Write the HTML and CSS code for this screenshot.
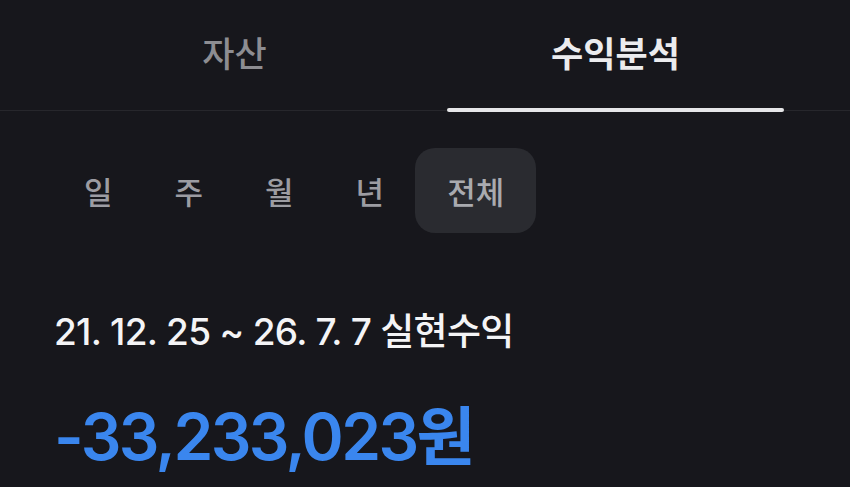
FILE: index.html
```html
<!DOCTYPE html>
<html lang="ko">
<head>
<meta charset="utf-8">
<link rel="stylesheet" href="styles.css">
</head>
<body>
<div class="screen">
  <nav class="tabs">
    <div class="tab"><span class="tab-label">자산</span><span class="tab-bar"></span></div>
    <div class="tab tab-active"><span class="tab-label">수익분석</span><span class="tab-bar"></span></div>
  </nav>
  <div class="content">
    <div class="periods">
      <span class="chip">일</span>
      <span class="chip">주</span>
      <span class="chip">월</span>
      <span class="chip">년</span>
      <span class="chip chip-active">전체</span>
    </div>
    <div class="range">21. 12. 25 ~ 26. 7. 7 실현수익</div>
    <div class="amount">-33,233,023원</div>
  </div>
</div>
</body>
</html>
```
FILE: styles.css
```css
html, body {
  margin: 0;
  padding: 0;
  background: #17171c;
}
body {
  font-family: Inter, "Noto Sans CJK KR", sans-serif;
  color: #ececee;
  width: 850px;
  height: 487px;
  overflow: hidden;
}
.screen {
  display: flex;
  flex-direction: column;
}
.tabs {
  display: grid;
  grid-template-columns: 1fr 1fr;
  padding: 0 44px;
  height: 110px;
  border-bottom: 1px solid #27272c;
}
.tab {
  display: flex;
  flex-direction: column;
  height: 110px;
}
.tab-label {
  flex: 1;
  display: flex;
  align-items: center;
  justify-content: center;
  font-size: 35px;
  font-weight: 500;
  color: #8d8d92;
  padding-bottom: 6px;
}
.tab-bar {
  height: 4px;
  margin: 0 22px -2px;
  border-radius: 2px;
}
.tab-active .tab-label {
  color: #ececee;
  font-weight: 700;
}
.tab-active .tab-bar {
  background: #e6e6e8;
}
.content {
  padding: 0 54px;
  display: flex;
  flex-direction: column;
}
.periods {
  display: flex;
  margin-top: 37px;
  margin-left: -1px;
}
.chip {
  height: 85px;
  padding: 0 31px;
  display: flex;
  align-items: center;
  justify-content: center;
  font-size: 31px;
  font-weight: 500;
  color: #9c9ca2;
  border-radius: 20px;
}
.chip-active {
  background: #2a2b30;
  color: #a9aaaf;
  padding: 0 32px;
}
.range {
  margin-top: 79px;
  font-size: 37px;
  line-height: 40px;
  font-weight: 500;
  color: #f4f4f6;
  letter-spacing: -0.7px;
}
.amount {
  margin-top: 47px;
  font-size: 64px;
  line-height: 76px;
  font-weight: 600;
  color: #3a86ee;
  letter-spacing: -2.6px;
}
```
